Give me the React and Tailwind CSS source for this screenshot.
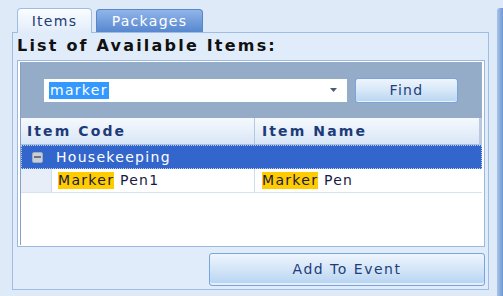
export default function App() {
  const hl = "bg-[#ffcc00]";
  return (
    <div className="w-[503px] h-[296px] bg-[#dfeaf8] flex font-['DejaVu_Sans',sans-serif] text-[14px] tracking-[1.3px] leading-[17px] overflow-hidden text-[#1a1a40]">
      <div className="w-[489px] pl-[12px] pt-[8px] flex flex-col shrink-0">
        {/* tabs */}
        <div className="flex items-end h-[24px] pl-[5px] gap-[4px]">
          <div className="relative z-10 h-[25px] w-[75px] -mb-px rounded-t-[4px] border border-b-0 border-[#9ebde6] bg-gradient-to-b from-[#fbfdff] to-[#e1ecfa] flex items-center justify-center text-[#1e3c72]">
            Items
          </div>
          <div className="h-[23px] w-[107px] rounded-t-[4px] border border-b-0 border-[#5a86c8] bg-gradient-to-b from-[#90b5e9] to-[#5787cf] flex items-center justify-center text-white">
            Packages
          </div>
        </div>
        {/* panel */}
        <div className="h-[258px] border border-[#9ebde6] bg-[#e1ecfa] px-[4px] flex flex-col">
          <div className="mt-[3px] h-[19px] leading-[19px] text-[16px] font-bold tracking-[2.2px] text-[#111]">
            List of Available Items:
          </div>
          <div className="mt-[5px] w-[468px] h-[187px] border border-[#9db8de] bg-white pt-[1px] pb-[1px] px-[2px] flex flex-col">
            {/* search area */}
            <div className="h-[56px] bg-[#95acc9] border-l border-[#8aa0bf] flex items-center shrink-0">
              <div className="ml-[23px] w-[303px] h-[23px] bg-white flex items-center pl-[5px] pr-[10px]">
                <span className="bg-[#3399ff] text-white px-[1px]">marker</span>
                <span className="flex-1" />
                <svg width="7" height="4" viewBox="0 0 7 4">
                  <path d="M0 0H7L3.5 4Z" fill="#4b5a72" />
                </svg>
              </div>
              <button className="ml-[8px] w-[103px] h-[25px] rounded-[3px] border border-[#7aa4dc] bg-gradient-to-b from-[#eef5fd] via-[#d6e7f8] to-[#b9d5f2] text-[#1f3d78] flex items-center justify-center shadow-[inset_0_-1px_0_#e6f2fd]">
                Find
              </button>
            </div>
            {/* grid */}
            <div className="flex-1 flex flex-col border-l border-[#8aa0bf]">
              <div className="flex bg-[#b9c9de]">
                <div className="flex-1 h-[27px] flex bg-gradient-to-b from-[#f5f9fe] to-[#d9e6f6] border-b border-[#a8bfdd] text-[#1d3b78] font-bold tracking-[2.1px] mr-[3px]">
                  <div className="w-[234px] border-r border-[#b5c8e2] pl-[6px] flex items-center">Item Code</div>
                  <div className="flex-1 pl-[7px] flex items-center">Item Name</div>
                </div>
              </div>
              <div className="h-[24px] bg-[#3366cc] border border-dotted border-[#b9cdf0] flex items-center text-white">
                <div className="ml-[10px] w-[11px] h-[11px] rounded-[2px] bg-[#c9cfd9] border border-[#a3acbb] flex items-center justify-center">
                  <div className="w-[7px] h-[2px] bg-[#6b7483]" />
                </div>
                <span className="ml-[13px]">Housekeeping</span>
              </div>
              <div className="h-[24px] flex border-b border-[#d8e2ef]">
                <div className="w-[31px] bg-[#e8eef7] border-r border-[#d0dbeb]" />
                <div className="w-[203px] border-r border-[#d0dbeb] pl-[6px] flex items-center">
                  <span className={hl}>Marker</span>&nbsp;Pen1
                </div>
                <div className="flex-1 pl-[7px] flex items-center">
                  <span className={hl}>Marker</span>&nbsp;Pen
                </div>
              </div>
              <div className="flex-1 bg-white" />
            </div>
          </div>
          <button className="mt-[6px] ml-[192px] w-[276px] h-[33px] rounded-[3px] border border-[#7aa4dc] bg-gradient-to-b from-[#eef5fd] via-[#d3e5f8] to-[#b6d3f1] text-[#1f3d78] flex items-center justify-center shadow-[inset_0_-2px_0_#e3f0fc] tracking-[1.5px]">
            Add To Event
          </button>
        </div>
      </div>
      <div className="ml-[8px] mt-[8px] w-[6px] h-[288px] rounded-tl-[3px] bg-gradient-to-r from-[#a9c4ea] to-[#6f98d4]" />
    </div>
  );
}
